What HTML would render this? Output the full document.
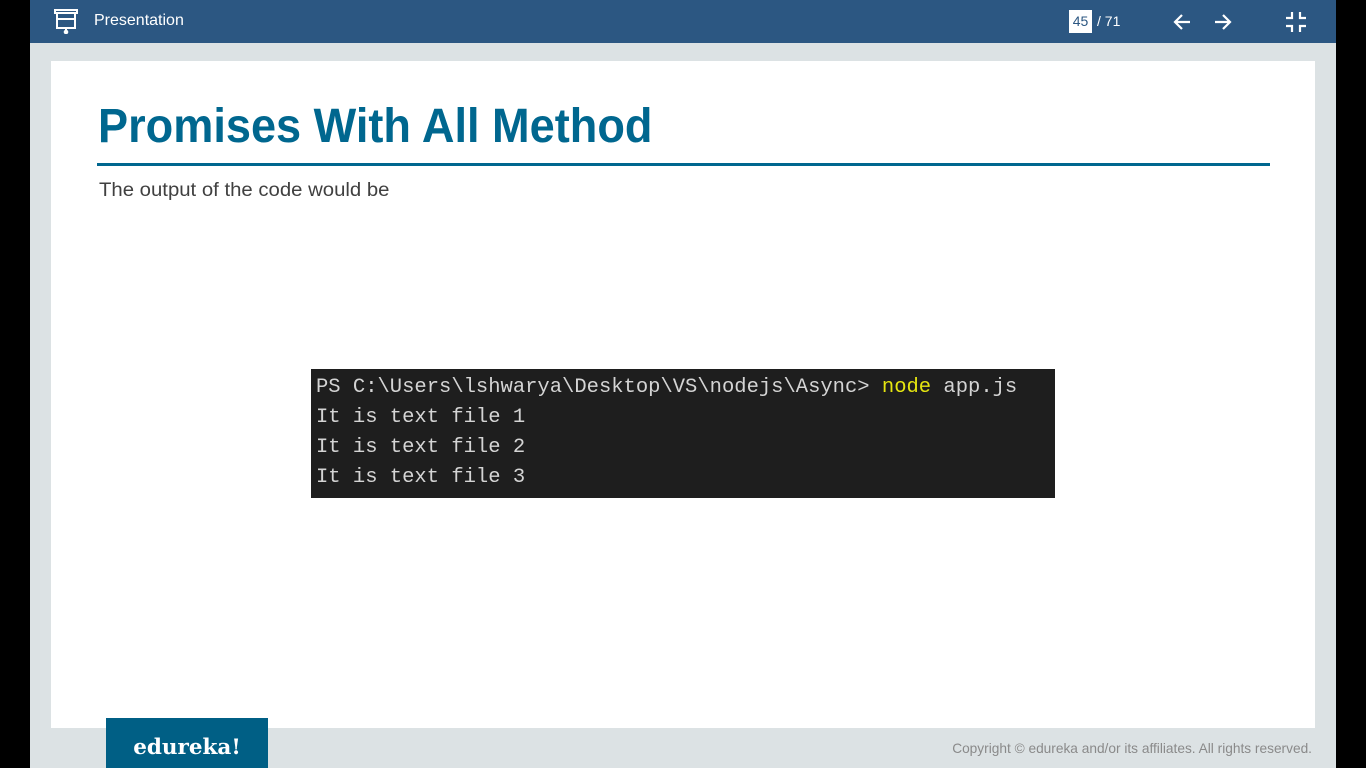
<!DOCTYPE html>
<html><head><style>
body{margin:0;width:1366px;height:768px;background:#000;position:relative;overflow:hidden;font-family:"Liberation Sans",sans-serif}
#main{position:absolute;left:30px;top:0;width:1306px;height:768px;background:#dce2e4;overflow:hidden}
#hdr{position:absolute;left:0;top:0;width:1306px;height:43px;background:#2c5782;color:#fff}
#slide{position:absolute;left:21px;top:61px;width:1264px;height:667px;background:#fff}
h1{position:absolute;left:47px;top:38px;margin:0;font-size:48px;font-weight:bold;color:#00678f;transform:scaleX(0.94);transform-origin:0 0}
#rule{position:absolute;left:46px;top:102px;width:1173px;height:3px;background:#00678f}
#sub{position:absolute;left:48px;top:119px;font-size:19px;color:#404040;transform:scaleX(1.07);transform-origin:0 0}
#term{position:absolute;left:260px;top:308px;width:744px;height:129px;background:#1e1e1e;overflow:hidden;color:#d4d4d4;font-family:"Liberation Mono",monospace;font-size:20.5px;line-height:30px;padding:4px 0 0 5px;box-sizing:border-box;white-space:pre}
#logo{position:absolute;left:76px;top:718px;width:162px;height:50px;background:#005f85;color:#fff;font-family:"DejaVu Serif",serif;font-weight:bold;font-size:21.5px;text-align:center;line-height:60px}
#copy{position:absolute;right:24px;top:741px;font-size:13.7px;color:#8a8a8a}
</style></head><body>
<div id="main">
<div id="hdr">
<svg style="position:absolute;left:23px;top:8px" width="26" height="26" viewBox="0 0 26 26" fill="none" stroke="#fff" stroke-width="2"><rect x="2" y="2" width="22" height="3"/><path d="M4 5v15h18V5M5 11h16M13 20v3"/><circle cx="13" cy="24" r="1.3" fill="#fff"/></svg>
<div style="position:absolute;left:64px;top:12px;font-size:16px">Presentation</div>
<div style="position:absolute;left:1039px;top:10px;width:23px;height:23px;background:#fff;color:#2c5782;font-size:14px;text-align:center;line-height:23px">45</div>
<div style="position:absolute;left:1067px;top:13px;font-size:14px">/ 71</div>
<svg style="position:absolute;left:1142px;top:12px" width="20" height="20" viewBox="0 0 20 20" fill="none" stroke="#fff" stroke-width="2.2"><path d="M18 10H3M10 3L3 10l7 7"/></svg>
<svg style="position:absolute;left:1183px;top:12px" width="20" height="20" viewBox="0 0 20 20" fill="none" stroke="#fff" stroke-width="2.2"><path d="M2 10h15M10 3l7 7-7 7"/></svg>
<svg style="position:absolute;left:1255px;top:11px" width="22" height="22" viewBox="0 0 22 22" fill="none" stroke="#fff" stroke-width="2.2"><path d="M7 1v6H1M15 1v6h6M7 21v-6H1M15 21v-6h6"/></svg>
</div>
<div id="slide">
<h1>Promises With All Method</h1>
<div id="rule"></div>
<div id="sub">The output of the code would be</div>
<div id="term">PS C:\Users\lshwarya\Desktop\VS\nodejs\Async&gt; <span style="color:#e5e510">node</span> app.js
It is text file 1
It is text file 2
It is text file 3
</div>
</div>
<div id="logo">edureka!</div>
<div id="copy">Copyright © edureka and/or its affiliates. All rights reserved.</div>
</div>
</body></html>
